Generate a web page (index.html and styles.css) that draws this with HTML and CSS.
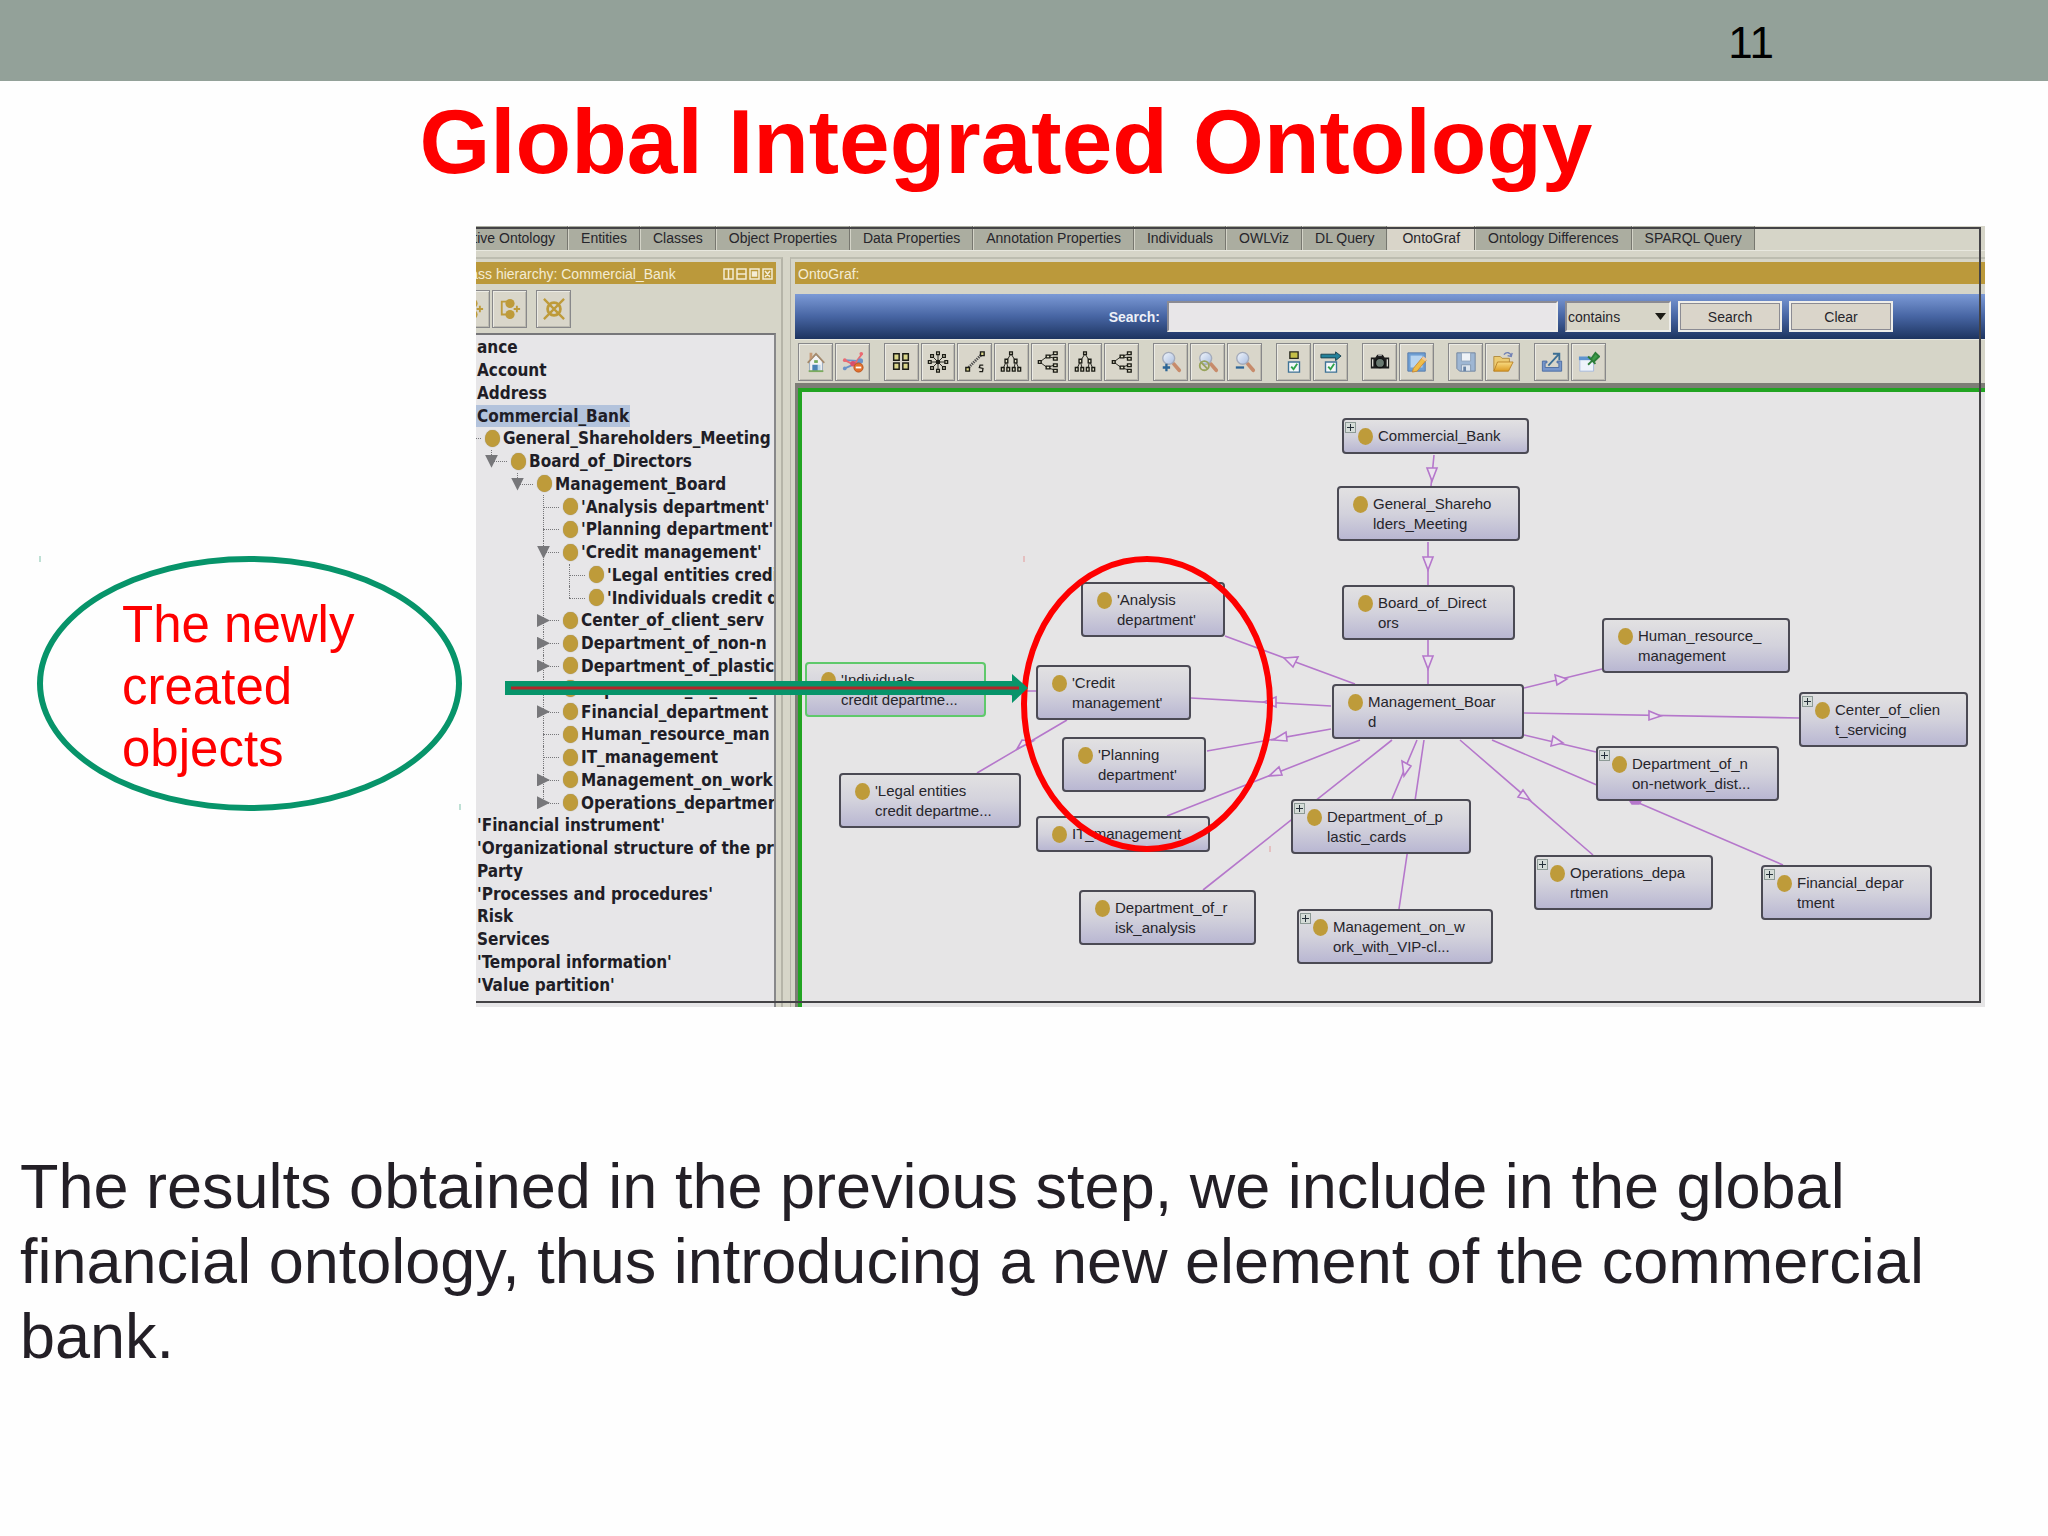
FILE: index.html
```html
<!DOCTYPE html>
<html lang="en">
<head>
<meta charset="utf-8">
<meta name="viewport" content="width=device-width, initial-scale=1">
<title>Global Integrated Ontology</title>
<link rel="stylesheet" href="styles.css">
</head>
<body>
<svg class="sprite" aria-hidden="true">
  <defs>
    <linearGradient id="glass" x1="0" y1="0" x2="1" y2="1"><stop offset="0" stop-color="#f2f6fc"/><stop offset="1" stop-color="#a9bde0"/></linearGradient>
    <linearGradient id="folder" x1="0" y1="0" x2="0" y2="1"><stop offset="0" stop-color="#f9dc83"/><stop offset="1" stop-color="#dc9b22"/></linearGradient>
  </defs>
  <symbol id="i-home" viewBox="0 0 24 24">
    <path d="M5 11v11h14V11l-7-7z" fill="#f3f3f4" stroke="#8fa3bb"/>
    <path d="M3 13L12 3l9 10" fill="none" stroke="#a58a6c" stroke-width="2"/>
    <path d="M5 2h3v5L5 10z" fill="#c79a75"/>
    <path d="M8 15h6v7H8z" fill="#4a83b5"/><path d="M14 15h3v7h-3z" fill="#b9d6ea"/><path d="M10 10h4v3h-4z" fill="#6faa5a"/>
    <path d="M4 22h16" stroke="#7cab5e" stroke-width="2"/>
  </symbol>
  <symbol id="i-unlink" viewBox="0 0 24 24">
    <path d="M3 10l18 1M3 19l18-8" stroke="#6b93c9" stroke-width="2"/>
    <path d="M3 10l10 5 9-12" fill="none" stroke="#ea6a72" stroke-width="2"/>
    <circle cx="3" cy="10" r="2" fill="#ea6a72"/><circle cx="21" cy="3" r="2" fill="#ea6a72"/><circle cx="3" cy="19" r="2" fill="#6b93c9"/><circle cx="20" cy="11" r="3" fill="#6b93c9"/><circle cx="12" cy="14" r="3" fill="#d8506c"/>
    <circle cx="18" cy="18" r="5" fill="#e2712d" stroke="#b9521c"/><path d="M15 18h6" stroke="#fff" stroke-width="2"/>
  </symbol>
  <symbol id="i-grid" viewBox="0 0 24 24">
    <g fill="#d9d58a" stroke="#1c1c16" stroke-width="1.6"><path d="M4 3h6v7H4zM14 3h6v7h-6zM4 13h6v7H4zM14 13h6v7h-6z"/></g>
  </symbol>
  <symbol id="i-radial" viewBox="0 0 24 24">
    <path d="M12 3v18M3 12h18M5 5l14 14M19 5L5 19" stroke="#1c1c16"/>
    <g fill="#e3e1c9" stroke="#1c1c16" stroke-width="1.4"><path d="M10.500 1h3v3h-3zM10.500 20h3v3h-3zM1.500 10.500h3v3h-3zM19.500 10.500h3v3h-3zM4 4h3v3H4zM17 4h3v3h-3zM4 17h3v3H4zM17 17h3v3h-3z"/></g>
    <circle cx="12" cy="12" r="2.500" fill="#1c1c16"/>
  </symbol>
  <symbol id="i-spring" viewBox="0 0 24 24">
    <path d="M5 18L19 4" stroke="#4d4d4d" stroke-width="3" stroke-dasharray="1.500 1"/>
    <path d="M2 18h4v4H2zM18 1h4v4h-4z" fill="#d9d58a" stroke="#1c1c16" stroke-width="1.500"/>
    <path d="M21 15.500h-3.500l-.8 2.500 4 1-.5 3.500h-3.500" fill="none" stroke="#1c1c16" stroke-width="1.400"/>
  </symbol>
  <symbol id="i-tree-v" viewBox="0 0 24 24">
    <path d="M12 3L7 11 3 20M7 11l2 9M12 3l5 8-2 9M17 11l4 9" fill="none" stroke="#1c1c16"/>
    <g fill="#e3e1c9" stroke="#1c1c16" stroke-width="1.500"><path d="M10.500 1h3v3h-3zM5.500 9h3v4h-3zM15.500 9h3v4h-3zM1.500 18h3v4h-3zM7.500 18h3v4h-3zM13.500 18h3v4h-3zM19.500 18h3v4h-3z"/></g>
  </symbol>
  <symbol id="i-tree-h" viewBox="0 0 24 24">
    <path d="M3 12l8-6 9-3M11 6l9 2M3 12l8 6 9-3M11 18l9 3" fill="none" stroke="#1c1c16"/>
    <g fill="#e3e1c9" stroke="#1c1c16" stroke-width="1.500"><path d="M1.500 10.500h3v3h-3zM10 4.500h4v3h-4zM10 16.500h4v3h-4zM18 1h4v3h-4zM18 7h4v3h-4zM18 14h4v3h-4zM18 20h4v3h-4z"/></g>
  </symbol>
  <symbol id="i-lens" viewBox="0 0 24 24">
    <path d="M15 14l6 7" stroke="#c78b6b" stroke-width="4" stroke-linecap="round"/>
    <circle cx="9.500" cy="8" r="6.500" fill="url(#glass)" stroke="#a4abbb" stroke-width="1.500"/>
  </symbol>
  <symbol id="i-zoom-in" viewBox="0 0 24 24"><use href="#i-lens"/><path d="M7 14v8M3 18h8" stroke="#2c6597" stroke-width="2.500"/></symbol>
  <symbol id="i-zoom-none" viewBox="0 0 24 24"><use href="#i-lens"/><circle cx="8" cy="16" r="5" fill="none" stroke="#97a35a" stroke-width="2"/><path d="M4.500 12.500l7 7" stroke="#97a35a" stroke-width="2"/></symbol>
  <symbol id="i-zoom-out" viewBox="0 0 24 24"><use href="#i-lens"/><path d="M2 18h9" stroke="#2c6597" stroke-width="2.500"/></symbol>
  <symbol id="i-check" viewBox="0 0 24 24"><path d="M6 12h12v11H6z" fill="#f4f7fa" stroke="#3f7396" stroke-width="1.500"/><path d="M9 17l2.500 3 4-6" fill="none" stroke="#2ea34a" stroke-width="2"/></symbol>
  <symbol id="i-node-types" viewBox="0 0 24 24"><path d="M7.500 1h9v7h-9z" fill="#c4bf48" stroke="#2a2a20" stroke-width="1.500"/><use href="#i-check"/></symbol>
  <symbol id="i-arc-types" viewBox="0 0 24 24"><path d="M1 3.500h16V1l6 4.500-6 5V7.500H1z" fill="#24819a" stroke="#173f4c"/><use href="#i-check"/></symbol>
  <symbol id="i-camera" viewBox="0 0 24 24"><path d="M2 7h5l2-3h6l2 3h5v12H2z" fill="#1d1d1d"/><path d="M4 9v8M20 9v8" stroke="#d8d8d0" stroke-width="1.500"/><circle cx="12" cy="13" r="5" fill="#68786f" stroke="#111" stroke-width="1.500"/><path d="M10 5h4" stroke="#bbb"/></symbol>
  <symbol id="i-edit" viewBox="0 0 24 24"><path d="M2 2h19v20H2z" fill="#6f9fd3" stroke="#557aa9"/><path d="M5 5h13v13H5z" fill="#b7d4f0"/><path d="M8 19L18 7l4 3L12 22l-5 1z" fill="#efbd48" stroke="#c98a35"/><path d="M18 7l4 3" stroke="#efc9a0" stroke-width="3"/></symbol>
  <symbol id="i-save" viewBox="0 0 24 24"><path d="M2 2h20v20H5l-3-3z" fill="#9eb6d3" stroke="#71839c"/><path d="M7 2h10v9H7z" fill="#eef2f7" stroke="#8fa2b9"/><path d="M7 15h10v7H7z" fill="#dfe6ee" stroke="#8297b0"/><path d="M9 17h3v5H9z" fill="#6883a5"/></symbol>
  <symbol id="i-open" viewBox="0 0 24 24"><path d="M2 22V6h7l2 2h8v5" fill="#eccb72" stroke="#b08a3c"/><path d="M2 22l4-10h17l-5 10z" fill="url(#folder)" stroke="#b98125"/><path d="M13 4c3-4 7-2 8 1M22 2l-1 4-4-1" fill="none" stroke="#7080b5" stroke-width="1.500"/></symbol>
  <symbol id="i-export" viewBox="0 0 24 24"><path d="M1.500 11h5v2h-2v5h15v-5h-2v-2h5v11h-21z" fill="#7796cb" stroke="#4a6ba1"/><path d="M8 16L19 4M13 3h7v7" fill="none" stroke="#3d6f94" stroke-width="2"/></symbol>
  <symbol id="i-pin" viewBox="0 0 24 24"><path d="M2 8h15v14H2z" fill="#eef3fb" stroke="#a3b7dc"/><path d="M1 6h13v4H1z" fill="#5e93cf"/><path d="M14 9l5-7 4 4-6 6zM11 6l8 8M15 11l-4 4" fill="#3e9c48" stroke="#2c7d39" stroke-width="2"/></symbol>
  <symbol id="i-subclass" viewBox="0 0 24 24"><g fill="#be9b3a"><circle cx="12" cy="6" r="5"/><circle cx="12" cy="18" r="5"/></g><path d="M8 4H3v14h5M16 12h7M19.500 8.500v7" fill="none" stroke="#be9b3a" stroke-width="2"/></symbol>
  <symbol id="i-delete" viewBox="0 0 24 24"><circle cx="12" cy="12" r="7" fill="none" stroke="#be9b3a" stroke-width="3"/><path d="M1 1l22 22M23 1L1 23" stroke="#be9b3a" stroke-width="2.500"/></symbol>
</svg>

<header class="topbar"><span>11</span></header>
<main>
  <h1>Global Integrated Ontology</h1>

  <div class="stage">
    <aside class="callout">The newly<br>created<br>objects</aside>

    <section class="app" aria-label="Ontology editor">
      <nav class="tabs">
        <a href="#" class="first">Active Ontology</a><a href="#">Entities</a><a href="#">Classes</a><a href="#">Object Properties</a><a href="#">Data Properties</a><a href="#">Annotation Properties</a><a href="#">Individuals</a><a href="#">OWLViz</a><a href="#">DL Query</a><a href="#" class="active">OntoGraf</a><a href="#">Ontology Differences</a><a href="#">SPARQL Query</a>
      </nav>

      <div class="panes">
        <section class="pane pane-left">
          <div class="titlebar">
            <span class="cut">Class hierarchy: Commercial_Bank</span>
            <svg class="winbtns" viewBox="0 0 50 12" width="50" height="12" fill="none" stroke="#f4ecd4" stroke-width="1.500"><path d="M1 1h9v10H1zM5.500 1v10M14 1h9v10h-9zM14 6h9M27 1h9v10h-9zM40 1h9v10h-9zM42 3l5 6M47 3l-5 6"/><path d="M29.500 4h4v4h-4z" fill="#f4ecd4"/></svg>
          </div>
          <div class="tools tools-left">
            <button class="tool" aria-label="Add subclass"><svg><use href="#i-subclass"/></svg></button>
            <button class="tool" aria-label="Add sibling class"><svg><use href="#i-subclass"/></svg></button>
            <button class="tool apart" aria-label="Delete class"><svg><use href="#i-delete"/></svg></button>
          </div>
          <ul class="tree">
            <li>ance</li>
            <li>Account</li>
            <li>Address</li>
            <li><span class="selected">Commercial_Bank</span></li>
            <li class="l1"><i class="branch flat"></i><i class="dot"></i>General_Shareholders_Meeting</li>
            <li class="l2"><i class="branch last"><button class="open" aria-label="Collapse"></button></i><i class="dot"></i>Board_of_Directors</li>
            <li class="l3"><i class="branch last"><button class="open" aria-label="Collapse"></button></i><i class="dot"></i>Management_Board</li>
            <li class="l4"><i class="branch"></i><i class="dot"></i>'Analysis department'</li>
            <li class="l4"><i class="branch"></i><i class="dot"></i>'Planning department'</li>
            <li class="l4"><i class="branch"><button class="open" aria-label="Collapse"></button></i><i class="dot"></i>'Credit management'</li>
            <li class="l4"><i class="rail"></i><i class="branch"></i><i class="dot"></i>'Legal entities credit</li>
            <li class="l4"><i class="rail"></i><i class="branch last"></i><i class="dot"></i>'Individuals credit d</li>
            <li class="l4"><i class="branch"><button class="shut" aria-label="Expand"></button></i><i class="dot"></i>Center_of_client_serv</li>
            <li class="l4"><i class="branch"><button class="shut" aria-label="Expand"></button></i><i class="dot"></i>Department_of_non-n</li>
            <li class="l4"><i class="branch"><button class="shut" aria-label="Expand"></button></i><i class="dot"></i>Department_of_plastic</li>
            <li class="l4"><i class="branch"></i><i class="dot"></i>Department_of_risk_</li>
            <li class="l4"><i class="branch"><button class="shut" aria-label="Expand"></button></i><i class="dot"></i>Financial_department</li>
            <li class="l4"><i class="branch"></i><i class="dot"></i>Human_resource_man</li>
            <li class="l4"><i class="branch"></i><i class="dot"></i>IT_management</li>
            <li class="l4"><i class="branch"><button class="shut" aria-label="Expand"></button></i><i class="dot"></i>Management_on_work</li>
            <li class="l4"><i class="branch last"><button class="shut" aria-label="Expand"></button></i><i class="dot"></i>Operations_departmen</li>
            <li>'Financial instrument'</li>
            <li>'Organizational structure of the pri</li>
            <li>Party</li>
            <li>'Processes and procedures'</li>
            <li>Risk</li>
            <li>Services</li>
            <li>'Temporal information'</li>
            <li>'Value partition'</li>
          </ul>
        </section>

        <section class="pane pane-right">
          <div class="titlebar">OntoGraf:</div>
          <form class="search">
            <label for="q">Search:</label>
            <input id="q" type="text">
            <select aria-label="Match mode"><option>contains</option></select>
            <button type="button">Search</button>
            <button type="button">Clear</button>
          </form>
          <div class="tools tools-right">
            <div class="group g2">
              <button class="tool" aria-label="Home"><svg><use href="#i-home"/></svg></button>
              <button class="tool" aria-label="Clear graph"><svg><use href="#i-unlink"/></svg></button>
            </div>
            <div class="group g7">
              <button class="tool" aria-label="Grid layout"><svg><use href="#i-grid"/></svg></button>
              <button class="tool" aria-label="Radial layout"><svg><use href="#i-radial"/></svg></button>
              <button class="tool" aria-label="Spring layout"><svg><use href="#i-spring"/></svg></button>
              <button class="tool" aria-label="Vertical tree"><svg><use href="#i-tree-v"/></svg></button>
              <button class="tool" aria-label="Horizontal tree"><svg><use href="#i-tree-h"/></svg></button>
              <button class="tool" aria-label="Vertical directed"><svg><use href="#i-tree-v"/></svg></button>
              <button class="tool" aria-label="Horizontal directed"><svg><use href="#i-tree-h"/></svg></button>
            </div>
            <div class="group g3">
              <button class="tool" aria-label="Zoom in"><svg><use href="#i-zoom-in"/></svg></button>
              <button class="tool" aria-label="No zoom"><svg><use href="#i-zoom-none"/></svg></button>
              <button class="tool" aria-label="Zoom out"><svg><use href="#i-zoom-out"/></svg></button>
            </div>
            <div class="group g2">
              <button class="tool" aria-label="Node types"><svg><use href="#i-node-types"/></svg></button>
              <button class="tool" aria-label="Arc types"><svg><use href="#i-arc-types"/></svg></button>
            </div>
            <div class="group g2">
              <button class="tool" aria-label="Save image"><svg><use href="#i-camera"/></svg></button>
              <button class="tool" aria-label="Edit tooltips"><svg><use href="#i-edit"/></svg></button>
            </div>
            <div class="group g2">
              <button class="tool" aria-label="Save graph"><svg><use href="#i-save"/></svg></button>
              <button class="tool" aria-label="Open graph"><svg><use href="#i-open"/></svg></button>
            </div>
            <div class="group g2">
              <button class="tool" aria-label="Export"><svg><use href="#i-export"/></svg></button>
              <button class="tool" aria-label="Pin tooltips"><svg><use href="#i-pin"/></svg></button>
            </div>
          </div>
          <div class="canvas">
            <svg class="edges" viewBox="802 392 1183 615" width="1183" height="615" fill="none" stroke="#b577cb" stroke-width="1.600">
              <path d="M1434 455L1431 486M1428 542V585M1428 640V684M1355 684L1225 636M1331 706L1191 698M1331 729L1207 751M1360 740L1167 816M1392 740L1203 890M1417 740L1392 799M1424 740L1399 909M1460 740L1593 855M1492 740L1783 865M1524 688L1602 669M1524 713L1799 718M1524 735L1596 752M1067 720L977 773M1036 691H986"/>
              <g fill="#ebe5ee"><path d="M1427 468h10l-5 13zM1423 557h10l-5 13zM1423 656h10l-5 13zM1284 658l14-1-5 10zM1264 702l12-5v10zM1273 740l13-8 1 9zM1269 776l10-9 3 8zM1404 776l-2-15 9 5zM1530 800l-7-10-5 7zM1567 679l-12-4 2 10zM1661 716l-12-5v9zM1563 743l-10-7-2 10zM1017 749l5-9 11 1zM1008 693l6-5v8z"/></g>
              <path d="M1630 801l2 3h7l2-3z" fill="#b577cb"/>
            </svg>
            <div class="node" style="left:540px;top:26px;width:187px"><b></b><i class="dot"></i>Commercial_Bank</div>
            <div class="node" style="left:535px;top:94px;width:183px"><i class="dot"></i>General_Shareho<br>lders_Meeting</div>
            <div class="node" style="left:540px;top:193px;width:173px"><i class="dot"></i>Board_of_Direct<br>ors</div>
            <div class="node" style="left:530px;top:292px;width:192px"><i class="dot"></i>Management_Boar<br>d</div>
            <div class="node" style="left:279px;top:190px;width:144px"><i class="dot"></i>'Analysis<br>department'</div>
            <div class="node" style="left:234px;top:273px;width:155px"><i class="dot"></i>'Credit<br>management'</div>
            <div class="node" style="left:260px;top:345px;width:144px"><i class="dot"></i>'Planning<br>department'</div>
            <div class="node" style="left:234px;top:424px;width:174px"><i class="dot"></i>IT_management</div>
            <div class="node" style="left:277px;top:498px;width:177px"><i class="dot"></i>Department_of_r<br>isk_analysis</div>
            <div class="node" style="left:489px;top:407px;width:180px"><b></b><i class="dot"></i>Department_of_p<br>lastic_cards</div>
            <div class="node" style="left:495px;top:517px;width:196px"><b></b><i class="dot"></i>Management_on_w<br>ork_with_VIP-cl...</div>
            <div class="node focus" style="left:3px;top:270px;width:181px"><i class="dot"></i>'Individuals<br>credit departme...</div>
            <div class="node" style="left:37px;top:381px;width:182px"><i class="dot"></i>'Legal entities<br>credit departme...</div>
            <div class="node" style="left:800px;top:226px;width:188px"><i class="dot"></i>Human_resource_<br>management</div>
            <div class="node" style="left:997px;top:300px;width:169px"><b></b><i class="dot"></i>Center_of_clien<br>t_servicing</div>
            <div class="node" style="left:794px;top:354px;width:183px"><b></b><i class="dot"></i>Department_of_n<br>on-network_dist...</div>
            <div class="node" style="left:732px;top:463px;width:179px"><b></b><i class="dot"></i>Operations_depa<br>rtmen</div>
            <div class="node" style="left:959px;top:473px;width:171px"><b></b><i class="dot"></i>Financial_depar<br>tment</div>
          </div>
        </section>
      </div>
    </section>

    <svg class="marks" viewBox="0 226 1985 781" width="1985" height="781" fill="none" aria-hidden="true">
      <ellipse cx="1147" cy="704" rx="123" ry="145" stroke="#fe0000" stroke-width="6"/>
      <path d="M505 681h507v-7l16 14-16 15v-8H505z" fill="#07946a"/>
      <path d="M511 688h508" stroke="#b3262a" stroke-width="3"/>
      <path d="M1024 556v6M1270 846v6" stroke="#e39a9a"/>
      <path d="M40 556v6M460 804v6" stroke="#7fc2ab"/>
    </svg>
  </div>

  <p class="body-text">The results obtained in the previous step, we include in the global financial ontology, thus introducing a new element of the commercial bank.</p>
</main>
</body>
</html>
```
FILE: styles.css
```css
* { box-sizing: border-box; }

body {
  margin: 0;
  background: #fefefe;
  color: #231f26;
  font-family: "Liberation Sans", Arial, sans-serif;
}

.sprite { position: absolute; width: 0; height: 0; }

.topbar {
  display: flex;
  justify-content: flex-end;
  align-items: center;
  height: 81px;
  padding: 5px 274px 0 0;
  background: #93a199;
  color: #000;
  font-size: 44px;
}

h1 {
  margin: 0 36px 23px 0;
  color: #fe0000;
  font-size: 91px;
  line-height: 122px;
  text-align: center;
}

.stage {
  position: relative;
  display: grid;
  grid-template-columns: 476px minmax(0, 1fr) 63px;
}

.callout {
  align-self: start;
  width: 425px;
  height: 255px;
  margin: 330px 0 0 37px;
  padding: 32px 0 0 79px;
  border: 6px solid #07946a;
  border-radius: 50%;
  color: #fe0000;
  font-size: 51px;
  line-height: 62px;
}

.marks { position: absolute; left: 0; top: 0; pointer-events: none; }

/* Editor window */
.app {
  position: relative;
  display: flex;
  flex-direction: column;
  overflow: hidden;
  background: #d6d5c8;
  color: #26252b;
  font-size: 14px;
}

.app::after {
  content: "";
  position: absolute;
  inset: 1px 4px 4px 0;
  border: solid #444346;
  border-width: 2px 2px 2px 0;
  pointer-events: none;
}

.tabs {
  display: flex;
  height: 25px;
  border-bottom: 1px solid #e8e8df;
  white-space: nowrap;
}

.tabs a {
  padding: 2px 12px 0;
  border-left: 1px solid #d4d4c8;
  border-right: 1px solid #77776f;
  background: #abada0;
  color: inherit;
  line-height: 20px;
  text-decoration: none;
}

.tabs .first { margin-left: -32px; }
.tabs .active { padding: 2px 14px 0; background: #d9d5c9; }

.panes {
  flex: 1;
  display: grid;
  grid-template-columns: 307px minmax(0, 1fr);
  gap: 7px;
  padding-top: 6px;
}

.pane {
  display: flex;
  flex-direction: column;
  min-width: 0;
  padding-top: 3px;
  border-top: 2px solid #bdbdb0;
}

.pane-left { padding-right: 5px; border-right: 2px solid #b5b4a8; }
.pane-right { padding-left: 4px; border-left: 1px solid #b5b4a8; }

.titlebar {
  display: flex;
  align-items: center;
  justify-content: space-between;
  height: 22px;
  padding: 1px 3px 0;
  background: #bb993b;
  color: #f4ecd4;
  white-space: nowrap;
}

.titlebar .cut { margin-left: -22px; }

.tool {
  display: flex;
  align-items: center;
  justify-content: center;
  height: 38px;
  padding: 0;
  border: 1px solid #88888a;
  background: #d9d6ca;
  box-shadow: inset 1px 1px #ecebe4, inset -1px -1px #bcbab0;
}

.tool svg { width: 22px; height: 22px; }

.tools-left {
  display: flex;
  gap: 2px;
  height: 49px;
  margin-left: -21px;
  padding-top: 6px;
}

.tools-left .tool { width: 35px; flex: none; }
.tools-left .apart { margin-left: 7px; }

/* Class tree */
.tree {
  flex: 1;
  display: grid;
  grid-template-rows: repeat(29, minmax(0, 1fr));
  margin: 0;
  padding: 1px 0 11px;
  border-top: 2px solid #77777a;
  border-right: 2px solid #88888a;
  background: #e7e6e8;
  color: #201d26;
  font-family: "DejaVu Sans Condensed", "DejaVu Sans", sans-serif;
  font-size: 17px;
  font-weight: bold;
  list-style: none;
  overflow: hidden;
  white-space: nowrap;
}

.tree li {
  display: flex;
  align-items: center;
  padding-left: 1px;
  line-height: 22px;
}

.selected { margin-left: -1px; padding: 0 1px; background: #b3c3dc; }

.tree .l1 { padding-left: 0; }
.tree .l2 { padding-left: 15px; }
.tree .l3 { padding-left: 41px; }
.tree .l4 { padding-left: 67px; }

.branch, .rail {
  position: relative;
  flex: none;
  align-self: stretch;
  width: 16px;
  margin-right: 4px;
}

.rail { width: 26px; margin-right: 0; }
.flat { margin-left: -11px; }

.branch::before, .rail::before {
  content: "";
  position: absolute;
  inset: 0 auto 0 0;
  border-left: 1px dotted #77777a;
}

.branch.last::before { bottom: 50%; }
.branch.flat::before { display: none; }

.branch::after {
  content: "";
  position: absolute;
  inset: 50% 0 auto 0;
  border-top: 1px dotted #77777a;
}

.branch button {
  position: absolute;
  z-index: 1;
  left: -6px;
  top: 5px;
  width: 13px;
  height: 13px;
  padding: 0;
  border: 0;
  background: #77777a;
}

.open { clip-path: polygon(0 0, 100% 0, 50% 100%); }
.shut { clip-path: polygon(0 0, 100% 50%, 0 100%); }

.dot {
  flex: none;
  width: 15px;
  height: 17px;
  border-radius: 50%;
  background: #be9b3a;
}

.tree .dot { margin-right: 3px; box-shadow: 0 0 1px #8d8468; }

/* Search row */
.search {
  display: flex;
  align-items: center;
  justify-content: flex-end;
  gap: 7px;
  height: 45px;
  margin-top: 10px;
  padding-right: 92px;
  background: linear-gradient(#7c9ad6, #4765a3 50%, #1d3460);
}

.search label { color: #eef1f8; font-weight: bold; }

.search input, .search select, .search button {
  height: 31px;
  border: 2px solid #8b8b93;
  border-right-color: #efeeea;
  border-bottom-color: #efeeea;
  border-radius: 0;
  color: inherit;
  font: inherit;
}

.search input { width: 391px; background: #e8e6e8; }

.search button {
  width: 104px;
  padding: 0;
  border-color: #efeeea;
  outline: 1px solid #8b8b93;
  outline-offset: -3px;
  background: #dad5ca;
}

.search select {
  width: 106px;
  padding: 0 1px;
  appearance: none;
  background: #d7d5c8 url("data:image/svg+xml,%3Csvg xmlns='http://www.w3.org/2000/svg' width='11' height='7'%3E%3Cpath d='M0 0h11L5.500 7z' fill='%231c1c16'/%3E%3C/svg%3E") no-repeat right 3px center;
}

.tools-right {
  display: flex;
  gap: 14px;
  height: 44px;
  padding: 3px 0 0 3px;
  border-top: 1px solid #e8e8df;
}

.group {
  display: grid;
  grid-auto-flow: column;
  grid-auto-columns: 1fr;
  gap: 2px;
}

.g2 { width: 72px; }
.g3 { width: 109px; }
.g7 { width: 255px; }

/* Graph canvas */
.canvas {
  position: relative;
  height: 619px;
  margin: 5px 0 0 3px;
  border: solid #22a422;
  border-width: 4px 0 0 4px;
  outline: 5px solid #7d7d76;
  background: #e6e5e6;
  font-size: 15px;
  clip-path: inset(-5px 0 0 -3px);
}

.edges { position: absolute; left: 0; top: 0; }

.node {
  position: absolute;
  min-height: 36px;
  padding: 6px 0 5px 34px;
  border: 2px solid #4b4a54;
  border-radius: 4px;
  background: linear-gradient(#e2e1e2, #d3d2dc 50%, #b9b7d2);
  line-height: 20px;
  white-space: nowrap;
}

.node .dot { position: absolute; left: 14px; top: 8px; }

.node.focus { border-color: #5fc96b; }

.node b {
  position: absolute;
  left: 1px;
  top: 2px;
  width: 11px;
  height: 11px;
  border: 1px solid #8d9a96;
  background:
    linear-gradient(#26303a, #26303a) center / 7px 1px no-repeat,
    linear-gradient(#26303a, #26303a) center / 1px 7px no-repeat,
    #d5dcd8;
}

.body-text {
  margin: 142px 30px 0 20px;
  font-size: 63px;
  line-height: 75px;
}
```
